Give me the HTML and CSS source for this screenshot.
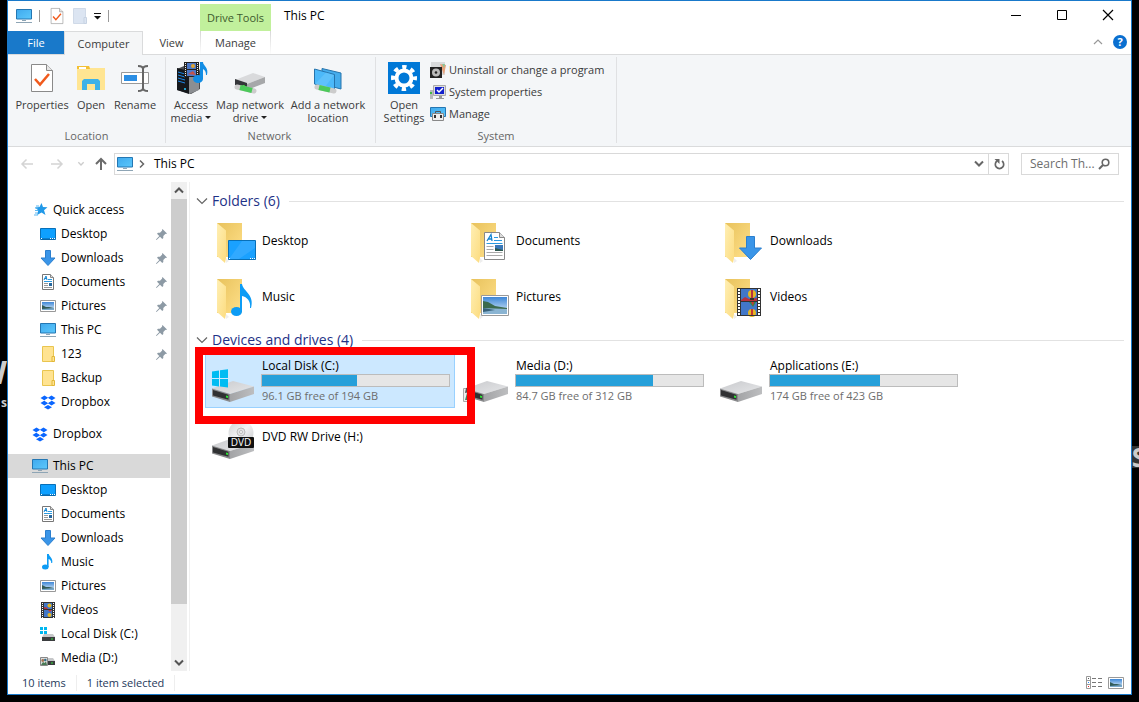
FILE: index.html
```html
<!DOCTYPE html>
<html lang="en">
<head>
<meta charset="utf-8">
<title>This PC</title>
<link rel="stylesheet" href="styles.css">
</head>
<body>
<svg class="sprite" aria-hidden="true">
  <defs>
    <linearGradient id="gScreen" x1="0" y1="0" x2="1" y2="1"><stop offset="0" stop-color="#3fa9ee"/><stop offset="1" stop-color="#5cc8fb"/></linearGradient>
    <linearGradient id="gBack" x1="0" y1="0" x2="1" y2="1"><stop offset="0" stop-color="#e8c25c"/><stop offset="1" stop-color="#ffe08a"/></linearGradient>
    <linearGradient id="gFlap" x1="0" y1="0" x2="1" y2="1"><stop offset="0" stop-color="#ffefb4"/><stop offset="1" stop-color="#fcdc80"/></linearGradient>
    <linearGradient id="gTop" x1="0" y1="0" x2="1" y2="1"><stop offset="0" stop-color="#c9cacd"/><stop offset="1" stop-color="#e6e7e9"/></linearGradient>
    <linearGradient id="gSide" x1="0" y1="0" x2="1" y2="0"><stop offset="0" stop-color="#a3a4a6"/><stop offset="1" stop-color="#bdbec0"/></linearGradient>
    <linearGradient id="gSky" x1="0" y1="0" x2="0" y2="1"><stop offset="0" stop-color="#3d86d6"/><stop offset="1" stop-color="#e2f2fb"/></linearGradient>
    <linearGradient id="gDisc" x1="0" y1="0" x2="1" y2="1"><stop offset="0" stop-color="#cfd0d2"/><stop offset=".5" stop-color="#f3f3f4"/><stop offset="1" stop-color="#c6c7c9"/></linearGradient>
  </defs>
  <symbol id="pc" viewBox="0 0 16 16"><path d="M.5 1.500h15v9.500h-15z" fill="url(#gScreen)" stroke="#2477b3"/><path d="M6 12h4v1H6zM0 14h16v1H0z" fill="#8ea5b5"/></symbol>
  <symbol id="desk" viewBox="0 0 16 16"><path d="M.5 2.500h15v11H.5z" fill="#0ea0ff" stroke="#0870b8"/><path d="M1 13h14" stroke="#0a5f9c"/><path d="M1 12.500h1M10 12.500h1m1 0h1m1 0h1" stroke="#fff"/></symbol>
  <symbol id="down" viewBox="0 0 16 16"><path d="M5.500.500h5V8h4.500L8 15.500 1 8h4.500z" fill="#3a95e8" stroke="#2b7fce"/></symbol>
  <symbol id="doc" viewBox="0 0 16 16"><path d="M2.500.500h8l3 3v12h-11z" fill="#fff" stroke="#777"/><path d="M10.500.500v3h3" fill="#ddd" stroke="#888"/><path d="M4 6l2-4 1 4M4.500 4.500h2.500" stroke="#1484d0" fill="none"/><path d="M8 5.500h4M4 7.500h8" stroke="#2b9ae0"/><path d="M4 9.500h4M4 11.500h4M4 13.500h8" stroke="#999"/><path d="M9 9h3v3H9z" fill="#27679d"/></symbol>
  <symbol id="pic" viewBox="0 0 16 16"><path d="M.500 2.500h15v11H.500z" fill="#fff" stroke="#999"/><path d="M2 4h12v8H2z" fill="url(#gSky)"/><path d="M2 7l4 2h3l5 1v2H2z" fill="#325b57"/><path d="M2 11l12-1v2H2z" fill="#79a9cc"/></symbol>
  <symbol id="fold" viewBox="0 0 16 16"><path d="M2.500.500h11v15h-11z" fill="#ffe391" stroke="#e9c54f"/><path d="M12 10.500h2.500v5H12z" fill="#ffe391" stroke="#e2b737"/></symbol>
  <symbol id="drop" viewBox="0 0 16 16"><path d="M4.500 1.500l4 2.500-4 2.500L.500 4zM11.500 1.500l4 2.500-4 2.500-4-2.500zM4.500 6.500l4 2.500-4 2.500-4-2.500zM11.500 6.500l4 2.500-4 2.500-4-2.500zM8 11l4 2.200L8 15.500l-4-2.300z" fill="#0a66ff"/><path d="M8 4l4 2.500L8 9 4 6.500z" fill="#fff"/></symbol>
  <symbol id="note" viewBox="0 0 16 16"><ellipse cx="5.300" cy="13" rx="3.300" ry="2.500" fill="#0d9cf5"/><path d="M7 0h1.800c.5 3 4.500 4 3.400 9h-1C11.500 7 10 5.500 8.600 5v8H7z" fill="#0d9cf5"/></symbol>
  <symbol id="film" viewBox="0 0 16 16"><path d="M1 0h14v16H1z" fill="#333"/><path d="M4 1h8v6H4zM4 8h8v7H4z" fill="#4277c8"/><path d="M2.500 1v15M13.500 1v15" stroke="#fff" stroke-dasharray="1 1"/><circle cx="9.500" cy="3.500" r="2" fill="#e6b722"/><path d="M4 5l4 1-1 1H4z" fill="#b9323d"/><circle cx="9.500" cy="13" r="2" fill="#e6b722"/><path d="M8 8h4l-2 2z" fill="#c9372f"/></symbol>
  <symbol id="sdrive" viewBox="0 0 16 16"><path d="M4 8h9l2 3H2z" fill="#c6c7c9"/><path d="M2 11h13v4H2z" fill="#3b3d3f"/><path d="M11 12.500h2v1h-2z" fill="#32e03b"/></symbol>
  <symbol id="sdriveC" viewBox="0 0 16 16"><use href="#sdrive"/><path d="M0 1h3v3H0zM4 1h3v3H4zM0 5h3v3H0zM4 5h3v3H4z" fill="#00b7f0"/></symbol>
  <symbol id="sdriveD" viewBox="0 0 16 16"><use href="#sdrive"/><path d="M.500 7.500h7v8h-7z" fill="#ddd" stroke="#888"/><circle cx="2.800" cy="10.500" r="1.400" fill="#a5724f"/><circle cx="5.300" cy="10" r="1.300" fill="#35718b"/><path d="M1 15l2-3 1.500 1L6 11.500 7 15z" fill="#497a55"/></symbol>
  <symbol id="star" viewBox="0 0 16 16"><path d="M9.500 1l1.500 4 4.500.3-3.500 3 1.500 4.700-4-2.400L5.200 13l1-4.700L3 5.500l4.500-.4z" fill="#2199e8"/><path d="M4 4h3M3 6h3M3 8.500h3M3 11h3M2 13h4" stroke="#5bb6f0"/></symbol>
  <symbol id="pin" viewBox="0 0 11 11"><path d="M6.500 0L11 4.500l-1 .5-.5-.2-2.200 2.300v2L6.300 10 4 7.700.8 10.800 0 11l.2-.8L3.300 7 1 4.700l1-1h2L6.200 1.500 6 1z" fill="#8d9aa5"/></symbol>
  <symbol id="check" viewBox="0 0 24 32"><path d="M1.500 2.500h15l6 6v21h-21z" fill="#fff" stroke="#8a8a8a"/><path d="M16.500 2.500v6h6" fill="#e6e6e6" stroke="#8a8a8a"/><path d="M5 17l5 5.500L19 12" fill="none" stroke="#f15a1c" stroke-width="2.500"/></symbol>
  <symbol id="folder" viewBox="0 0 48 48"><path d="M8 6h25v34H8z" fill="url(#gBack)"/><path d="M8 6l9 7.500V41l-1 5-8-7z" fill="url(#gFlap)"/><path d="M17 41l3 3-3 2z" fill="#eee"/></symbol>
  <symbol id="drive" viewBox="0 0 48 48"><path d="M3 31.500L24 24l21 5.500L21 37z" fill="url(#gTop)"/><path d="M21 37l24-7.500V37l-24 8z" fill="url(#gSide)"/><path d="M3 31.500L21 37v8L3 39.500z" fill="#88898b"/><path d="M4 33l15.500 4.700v5L4 38.500z" fill="#303133"/><path d="M17 38.500l2 .5v2l-2-.5z" fill="#2de536"/></symbol>
  <symbol id="chev" viewBox="0 0 12 12"><path d="M1 3.500L6 8.500l5-5" fill="none" stroke="currentColor" stroke-width="1.200"/></symbol>
  <symbol id="chevb" viewBox="0 0 12 12"><path d="M2 3.500L6 7.500l4-4" fill="none" stroke="currentColor" stroke-width="2"/></symbol>
</svg>

<span class="wall wall-a">W</span><span class="wall wall-b">s</span><span class="wall wall-c">S</span>

<div class="window">
  <header class="titlebar">
    <div class="quick">
      <svg class="i16"><use href="#pc"/></svg><span class="bar"></span>
      <button class="bare qa-props" aria-label="Properties"><svg width="14" height="18"><use href="#check"/></svg></button>
      <button class="bare qa-new" aria-label="New folder"><svg width="14" height="16" viewBox="0 0 14 16"><path d="M.500.500h12v15H.500z" fill="#dce5f2" stroke="#d0dae8"/><path d="M11 9.500h2.500v6H11z" fill="#dce5f2" stroke="#c7d3e3"/></svg></button>
      <button class="bare qa-more" aria-label="Customize toolbar"><svg width="7" height="7" viewBox="0 0 7 7"><path d="M0 0h7v1H0zM0 3h7L3.500 6.500z" fill="#111"/></svg></button><span class="bar"></span>
    </div>
    <div class="context">Drive Tools</div>
    <h1 class="title">This PC</h1>
    <div class="controls">
      <button class="bare" aria-label="Minimize"><svg width="12" height="12" viewBox="0 0 12 12"><path d="M1 5.500h10" stroke="#000"/></svg></button>
      <button class="bare" aria-label="Maximize"><svg width="12" height="12" viewBox="0 0 12 12"><path d="M1.500.500h9v9h-9z" fill="none" stroke="#000"/></svg></button>
      <button class="bare" aria-label="Close"><svg width="12" height="12" viewBox="0 0 12 12"><path d="M1 0l10 10M11 0L1 10" stroke="#000" stroke-width="1.200"/></svg></button>
    </div>
  </header>

  <div class="tabs">
    <button class="tab tab-file">File</button>
    <button class="tab tab-computer">Computer</button>
    <button class="tab tab-view">View</button>
    <button class="tab tab-manage">Manage</button>
    <div class="tabs-end">
      <button class="bare" aria-label="Collapse ribbon"><svg width="12" height="12" viewBox="0 0 12 12"><path d="M2 8l4-4 4 4" fill="none" stroke="#999" stroke-width="1.200"/></svg></button>
      <button class="help" aria-label="Help">?</button>
    </div>
  </div>

  <div class="ribbon">
    <section class="group group-location">
      <div class="tools">
        <button class="big"><svg viewBox="0 0 32 32"><use href="#check" x="4" y="0" width="24" height="32"/></svg>Properties</button>
        <button class="big big-open"><svg viewBox="0 0 32 32"><path d="M2 4h12l1 2h15v22H2z" fill="#ffe592"/><path d="M2 4h12l1 3H2z" fill="#f3c033"/><path d="M4 5h7v2H4z" fill="#fff"/><path d="M7 28V19l2-2h14l2 2v9h-5v-6h-8v6z" fill="#3db2e8"/></svg>Open</button>
        <button class="big big-rename"><svg viewBox="0 0 32 32"><path d="M2.500 10.500h27v11h-27z" fill="#fff" stroke="#999"/><path d="M5 13h13v6H5z" fill="#2b8ee4"/><path d="M19 4c3 0 5 1 5 3v19c0 2-2 3-5 3M29 4c-3 0-5 1-5 3v19c0 2 2 3 5 3" stroke="#666" stroke-width="2" fill="none"/></svg>Rename</button>
      </div>
      <h2 class="caption">Location</h2>
    </section>
    <section class="group group-network">
      <div class="tools">
        <button class="big big-media"><svg viewBox="0 0 32 32"><path d="M2 7l7-3h14l2 5v18l-9 5-14-4z" fill="#4a4c50"/><path d="M2 6l12 3v23L2 28z" fill="#15181c"/><path d="M14 9l10-4v23l-10 4z" fill="#8b8e92"/><path d="M3 10l7 2M3 13l7 2M3 16l7 2M3 19l7 2" stroke="#1d87e8"/><circle cx="10" cy="27" r="1" fill="#2acbff"/><path d="M9 0h15v15H9z" fill="#222"/><path d="M12 1h9v6h-9zM12 8h9v6h-9z" fill="#4c78c8"/><circle cx="18" cy="4" r="2" fill="#e0a430"/><path d="M13 12l5-3 3 4z" fill="#c65349"/><path d="M10.500 1v14M22.500 1v14" stroke="#eee" stroke-dasharray="1 1"/><ellipse cx="23" cy="17" rx="5" ry="4" fill="#128de4"/><path d="M25 0h3c0 4 6 5 4 13h-1c0-3-1-5-3-6v10h-3z" fill="#128de4"/></svg><span>Access<br>media<i class="caret"></i></span></button>
        <button class="big big-map"><svg viewBox="0 0 32 32"><path d="M1 18l18-7 12 4-18 7z" fill="#d9dadc"/><path d="M13 22l18-7v6l-18 7z" fill="#a6a8aa"/><path d="M1 17l12 4v6L1 23z" fill="#34363a"/><path d="M9 23l2 .6v1.500l-2-.6z" fill="#3f3"/><path d="M3 25l17 4" stroke="#ccc" stroke-width="5" stroke-linecap="round"/><path d="M6 25.500l12 3" stroke="#4cc95a" stroke-width="5"/></svg><span>Map network<br>drive<i class="caret"></i></span></button>
        <button class="big big-add"><svg viewBox="0 0 32 32"><path d="M10 6.500l19 4.500v16l-19-5z" fill="#45acec" stroke="#2674ad"/><path d="M2.500 7l20 5.500V28l-20-6z" fill="#4cb9fa" stroke="#2674ad"/><path d="M3 22L14 10.500l8 2.500-9 12z" fill="#7bcefd" opacity=".4"/><path d="M5 25l17 4" stroke="#ccc" stroke-width="5" stroke-linecap="round"/><path d="M7 25.500l11 2.500" stroke="#4cc95a" stroke-width="5"/></svg><span>Add a network<br>location</span></button>
      </div>
      <h2 class="caption">Network</h2>
    </section>
    <section class="group group-system">
      <div class="tools">
        <button class="big big-settings"><svg viewBox="0 0 32 32"><path d="M0 0h32v32H0z" fill="#0078d7"/><circle cx="16" cy="16" r="7.500" fill="none" stroke="#fff" stroke-width="4"/><circle cx="16" cy="16" r="11" fill="none" stroke="#fff" stroke-width="4" stroke-dasharray="4.320 4.320" stroke-dashoffset="2.160"/></svg><span>Open<br>Settings</span></button>
        <div class="list">
          <button class="small"><svg class="i16" viewBox="0 0 16 16"><path d="M1 0h14v13H1z" fill="#d9dbdc"/><path d="M10 2l6 1-2 10z" fill="#e8a17a"/><path d="M12 2h3l-1 4z" fill="#86c69a"/><path d="M0 5h12v11H0z" fill="#222"/><circle cx="6" cy="10.500" r="4" fill="#bbb"/><circle cx="6" cy="10.500" r="1.300" fill="#222"/></svg>Uninstall or change a program</button>
          <button class="small"><svg class="i16" viewBox="0 0 16 16"><path d="M3.500 1.500h12v10h-12z" fill="#ddd" stroke="#aaa"/><path d="M5 3h9v7H5z" fill="#1220cc"/><path d="M7 6l2 2 4-4" stroke="#fff" stroke-width="1.500" fill="none"/><path d="M9 12h3v2h2v1H6v-1h3z" fill="#999"/><path d="M0 6h3v9H0z" fill="#b8babc"/><path d="M0 8h2v2H0z" fill="#4b4"/></svg>System properties</button>
          <button class="small"><svg class="i16" viewBox="0 0 16 16"><path d="M.500 1.500h15v9H.500z" fill="url(#gScreen)" stroke="#2477b3"/><path d="M5.500 7V5.500h5V7" fill="none" stroke="#555"/><path d="M2.500 7.500h11v7h-11z" fill="#eee" stroke="#888"/><path d="M4 9h2v3H4zM10 9h2v3h-2z" fill="#333"/></svg>Manage</button>
        </div>
      </div>
      <h2 class="caption">System</h2>
    </section>
  </div>

  <div class="address">
    <button class="bare nav-btn" aria-label="Back"><svg width="14" height="12" viewBox="0 0 14 12"><path d="M13 6H2M6.500 1.500L2 6l4.500 4.500" fill="none" stroke="#d4d4d4" stroke-width="1.500"/></svg></button>
    <button class="bare nav-btn" aria-label="Forward"><svg width="14" height="12" viewBox="0 0 14 12"><path d="M1 6h11M7.500 1.500L12 6l-4.500 4.500" fill="none" stroke="#d4d4d4" stroke-width="1.500"/></svg></button>
    <button class="bare nav-recent" aria-label="Recent locations"><svg width="8" height="8"><use href="#chevb"/></svg></button>
    <button class="bare nav-up" aria-label="Up"><svg width="14" height="14" viewBox="0 0 14 14"><path d="M7 13V2M2 7l5-5 5 5" fill="none" stroke="#6b6b6b" stroke-width="2"/></svg></button>
    <div class="path">
      <svg class="i16"><use href="#pc"/></svg>
      <svg class="crumb" width="8" height="10" viewBox="0 0 8 10"><path d="M2 1.500L5.500 5 2 8.500" fill="none" stroke="#666" stroke-width="1.500"/></svg>
      <a href="#">This PC</a>
      <button class="bare path-drop" aria-label="Previous locations"><svg width="12" height="12"><use href="#chevb"/></svg></button>
      <button class="bare refresh" aria-label="Refresh"><svg width="12" height="12" viewBox="0 0 12 12"><path d="M9 3a4.200 4.200 0 1 1-5 0" fill="none" stroke="#666" stroke-width="1.700"/><path d="M1.500 1h5v5L5 4.500z" fill="#666"/></svg></button>
    </div>
    <label class="search"><input type="text" placeholder="Search Th..." aria-label="Search This PC"><svg width="12" height="12" viewBox="0 0 12 12"><circle cx="7.500" cy="4.500" r="3.300" fill="none" stroke="#666" stroke-width="1.600"/><path d="M5 7L1 11" stroke="#666" stroke-width="2"/></svg></label>
  </div>

  <div class="body">
    <nav class="side">
      <a href="#" class="row top"><svg class="i16"><use href="#star"/></svg>Quick access</a>
      <a href="#" class="row"><svg class="i16"><use href="#desk"/></svg>Desktop<svg class="pin"><use href="#pin"/></svg></a>
      <a href="#" class="row"><svg class="i16"><use href="#down"/></svg>Downloads<svg class="pin"><use href="#pin"/></svg></a>
      <a href="#" class="row"><svg class="i16"><use href="#doc"/></svg>Documents<svg class="pin"><use href="#pin"/></svg></a>
      <a href="#" class="row"><svg class="i16"><use href="#pic"/></svg>Pictures<svg class="pin"><use href="#pin"/></svg></a>
      <a href="#" class="row"><svg class="i16"><use href="#pc"/></svg>This PC<svg class="pin"><use href="#pin"/></svg></a>
      <a href="#" class="row"><svg class="i16"><use href="#fold"/></svg>123<svg class="pin"><use href="#pin"/></svg></a>
      <a href="#" class="row"><svg class="i16"><use href="#fold"/></svg>Backup</a>
      <a href="#" class="row"><svg class="i16"><use href="#drop"/></svg>Dropbox</a>
      <a href="#" class="row top spaced"><svg class="i16"><use href="#drop"/></svg>Dropbox</a>
      <a href="#" class="row top spaced current"><svg class="i16"><use href="#pc"/></svg>This PC</a>
      <a href="#" class="row"><svg class="i16"><use href="#desk"/></svg>Desktop</a>
      <a href="#" class="row"><svg class="i16"><use href="#doc"/></svg>Documents</a>
      <a href="#" class="row"><svg class="i16"><use href="#down"/></svg>Downloads</a>
      <a href="#" class="row"><svg class="i16"><use href="#note"/></svg>Music</a>
      <a href="#" class="row"><svg class="i16"><use href="#pic"/></svg>Pictures</a>
      <a href="#" class="row"><svg class="i16"><use href="#film"/></svg>Videos</a>
      <a href="#" class="row"><svg class="i16"><use href="#sdriveC"/></svg>Local Disk (C:)</a>
      <a href="#" class="row"><svg class="i16"><use href="#sdriveD"/></svg>Media (D:)</a>
    </nav>
    <div class="scroll">
      <button class="bare scroll-btn up" aria-label="Scroll up"><svg width="12" height="12"><use href="#chevb"/></svg></button>
      <div class="track"><div class="thumb"></div></div>
      <button class="bare scroll-btn" aria-label="Scroll down"><svg width="12" height="12"><use href="#chevb"/></svg></button>
    </div>

    <main class="pane">
      <h2 class="section"><svg width="12" height="12"><use href="#chev"/></svg>Folders (6)</h2>
      <div class="grid">
        <a href="#" class="item"><svg class="i48" viewBox="0 0 48 48"><use href="#folder"/><path d="M19.500 23.500h27v19h-27z" fill="#1aa1ff" stroke="#0870b8"/><path d="M20 42l13-18h13v7L30 42z" fill="#47b2ff" opacity=".5"/><path d="M20 41.500h1m20 0h1m1 0h1m1 0h1" stroke="#fff"/></svg>Desktop</a>
        <a href="#" class="item"><svg class="i48" viewBox="0 0 48 48"><use href="#folder"/><path d="M21.500 15.500h15l5 5v22h-20z" fill="#fff" stroke="#888"/><path d="M36.500 15.500v5h5" fill="#ddd" stroke="#888"/><path d="M24 24l4-6.500 1 6.500M25 22h4" fill="none" stroke="#1484d0" stroke-width="1.300"/><path d="M31 20.500h4M31 23.500h8M23.500 26.500h16" stroke="#2b9ae0"/><path d="M23.500 29.500h7M23.500 32.500h7M23.500 35.500h16M23.500 38.500h16" stroke="#aaa"/><path d="M32 28h8v6h-8z" fill="#3a78b8"/><path d="M32 31l8 2v1h-8z" fill="#2f584e"/></svg>Documents</a>
        <a href="#" class="item"><svg class="i48" viewBox="0 0 48 48"><use href="#folder"/><path d="M29.500 19.500h8V31h7l-11 11.500L22.500 31h7z" fill="#3a95e8" stroke="#2b7fce"/></svg>Downloads</a>
        <a href="#" class="item"><svg class="i48" viewBox="0 0 48 48"><use href="#folder"/><ellipse cx="27.500" cy="38.500" rx="5.500" ry="4.500" fill="#0d9cf5"/><path d="M31 11h2c1 7 13 11 9 24h-1c1-7-3-11-8-12v16h-2z" fill="#0d9cf5"/></svg>Music</a>
        <a href="#" class="item"><svg class="i48" viewBox="0 0 48 48"><use href="#folder"/><path d="M18.500 22.500h27v20h-27z" fill="#fff" stroke="#999"/><path d="M20 24h24v17H20z" fill="url(#gSky)"/><path d="M20 28l5 1 7 4 12 2v2H20z" fill="#3c6a4d"/><path d="M20 35l24 1v5H20z" fill="#8ab4d2"/><path d="M20 35l12 2-12 2z" fill="#38617a"/></svg>Pictures</a>
        <a href="#" class="item"><svg class="i48" viewBox="0 0 48 48"><use href="#folder"/><path d="M20 15h24v28H20z" fill="#333"/><path d="M24 16h16v12H24zM24 29h16v13H24z" fill="#4277c8"/><path d="M22 16v27M42 16v27" stroke="#fff" stroke-width="2" stroke-dasharray="2 1"/><path d="M24 27l4-3 4 2 8-1v3H24z" fill="#b9323d"/><circle cx="35" cy="21" r="4" fill="#e6b722"/><path d="M34 17h2v8h-2z" fill="#b9323d"/><path d="M33 25h4v2h-4z" fill="#333"/><path d="M32 29h7l-3 5z" fill="#2d8b4b"/><path d="M34 29h3l-1 4z" fill="#c9372f"/><circle cx="35" cy="40" r="4" fill="#e6b722"/><path d="M34 36h2v6h-2z" fill="#c9372f"/><path d="M24 42h16v1H24z" fill="#333"/></svg>Videos</a>
      </div>
      <h2 class="section section-drives"><svg width="12" height="12"><use href="#chev"/></svg>Devices and drives (4)</h2>
      <div class="grid grid-drives">
        <div class="item selected">
          <svg class="i48" viewBox="0 0 48 48"><use href="#drive"/><path d="M3 14.500l7-1V21H3zM11 13.300l8-1.100V21h-8zM3 22h7v7.500l-7-1zM11 22h8v8.600l-8-1z" fill="#00bcf2"/></svg>
          <div class="info"><span>Local Disk (C:)</span><div class="usage"><div class="used" style="width:51%"></div></div><span class="free">96.1 GB free of 194 GB</span></div>
          <div class="mark"></div>
        </div>
        <div class="item">
          <svg class="i48" viewBox="0 0 48 48"><use href="#drive"/><path d="M.500 31.500h11v13H.500z" fill="#eee" stroke="#aaa"/><path d="M3 31l4-1v5l-5 1z" fill="#555"/><path d="M2 43l2-7 3 3 2-4 2 8z" fill="#498061"/></svg>
          <div class="info"><span>Media (D:)</span><div class="usage"><div class="used" style="width:73%"></div></div><span class="free">84.7 GB free of 312 GB</span></div>
        </div>
        <div class="item">
          <svg class="i48" viewBox="0 0 48 48"><use href="#drive"/></svg>
          <div class="info"><span>Applications (E:)</span><div class="usage"><div class="used" style="width:59%"></div></div><span class="free">174 GB free of 423 GB</span></div>
        </div>
        <a href="#" class="item"><svg class="i48" viewBox="0 0 48 48"><use href="#drive" y="1"/><circle cx="32" cy="20" r="12.500" fill="url(#gDisc)"/><circle cx="32" cy="19" r="4" fill="#e3e3e5" stroke="#bbb"/><circle cx="32" cy="19" r="1.500" fill="#fff" stroke="#bbb"/><rect x="19" y="24" width="26" height="11" rx="1" fill="#111"/><text class="dvd" x="32" y="33" text-anchor="middle">DVD</text></svg>DVD RW Drive (H:)</a>
      </div>
    </main>
  </div>

  <footer class="status">
    <span>10 items</span><span>1 item selected</span>
    <div class="views">
      <button class="bare" aria-label="Details view"><svg width="16" height="14" viewBox="0 0 16 14"><path d="M.500.500h4v12h-4zM.500 4.500h4M.500 8.500h4" fill="none" stroke="#999"/><path d="M6 2.500h4m2 0h4M6 6.500h4m2 0h4M6 10.500h4m2 0h4" stroke="#777"/><path d="M2 2.500h1" stroke="#555"/><path d="M2 6.500h1" stroke="#28f"/><path d="M2 10.500h1" stroke="#e22"/></svg></button>
      <button class="bare" aria-label="Large icons view"><svg width="14" height="16" viewBox="1 0 14 16" preserveAspectRatio="none"><use href="#pic" width="16" height="16"/></svg></button>
    </div>
  </footer>
</div>
</body>
</html>
```
FILE: styles.css
```css
* { box-sizing: border-box; }
body {
  margin: 0;
  height: 100vh;
  padding: 0 7px 7px;
  background: #000;
  color: #000;
  font: 12px/16px "Open Sans", "Noto Sans", sans-serif;
  position: relative;
  overflow: hidden;
}
svg { display: block; flex: none; overflow: visible; }
h1, h2 { margin: 0; font: inherit; }
a { color: inherit; text-decoration: none; }
button { font: inherit; color: inherit; margin: 0; padding: 0; border: 0; background: none; white-space: nowrap; }
.bare { display: flex; align-items: center; justify-content: center; }
.sprite { position: absolute; width: 0; height: 0; }
.i16 { width: 16px; height: 16px; }
.i48 { width: 48px; height: 48px; }

.wall { position: absolute; color: #ccc; font-weight: bold; line-height: 24px; }
.wall-a { left: -24px; top: 360px; font-size: 32px; }
.wall-b { left: 1px; top: 391px; font-size: 12px; }
.wall-c { right: -7px; top: 446px; font-size: 26px; background: #333; line-height: 22px; }

.window {
  position: relative;
  height: 100%;
  display: flex;
  flex-direction: column;
  background: #fff;
  border: 1px solid #1979ca;
}

.titlebar { display: flex; height: 30px; flex: none; }
.quick { display: flex; align-items: center; width: 192px; padding-left: 8px; }
.bar { width: 1px; height: 12px; margin-left: 7px; background: #999; }
.qa-props { margin-left: 10px; }
.qa-new { margin-left: 9px; }
.qa-more { margin-left: 7px; }
.context { width: 71px; margin-top: 3px; background: #c1f09c; color: #3e5a2d; font-size: 11px; line-height: 27px; text-align: center; white-space: nowrap; }
.title { padding-left: 13px; line-height: 30px; }
.controls { display: flex; margin-left: auto; }
.controls button { width: 46px; }

.tabs { display: flex; height: 24px; flex: none; border-bottom: 1px solid #dadbdc; color: #3b3b3b; font-size: 11px; }
.tab { height: 23px; }
.tab-file { width: 56px; background: #1979ca; color: #fff; }
.tab-computer { width: 79px; height: 24px; background: #f5f6f7; border: 1px solid #dadbdc; border-width: 1px 1px 0; }
.tab-view { width: 57px; }
.tab-manage { width: 71px; border: 1px solid; border-width: 0 1px; border-image: linear-gradient(#d5d5d5, #fff) 1; }
.tabs-end { display: flex; align-items: center; gap: 9px; margin-left: auto; padding: 0 4px 2px 0; }
.help { width: 14px; height: 14px; border-radius: 50%; background: #0a6fd0; color: #fff; font-weight: bold; line-height: 14px; }

.ribbon { display: flex; height: 92px; flex: none; background: #f4f6f8; border-bottom: 1px solid #dadbdc; color: #3b3b3b; font-size: 11px; }
.group { display: flex; flex-direction: column; margin: 2px 0 3px; border-right: 1px solid #e0e1e3; }
.group-location { width: 158px; padding-left: 5px; }
.group-network { width: 210px; padding-left: 3px; }
.group-system { width: 241px; padding-left: 5px; }
.tools { display: flex; flex: 1; min-height: 0; padding-top: 5px; }
.big { display: flex; flex-direction: column; align-items: center; width: 58px; gap: 4px; line-height: 13px; }
.big svg { width: 32px; height: 32px; }
.big-open { width: 40px; }
.big-rename { width: 48px; }
.big-media { width: 44px; }
.big-map { width: 74px; }
.big-add { width: 82px; }
.big-settings { width: 46px; }
.caret { display: inline-block; margin: 0 0 3px 3px; border: 3px solid transparent; border-top-color: #222; border-bottom: 0; }
.list { display: flex; flex-direction: column; padding-left: 3px; }
.small { display: flex; align-items: center; gap: 3px; height: 22px; padding-bottom: 6px; }
.caption { color: #666; line-height: 14px; text-align: center; margin-left: -5px; }

.address { display: flex; align-items: center; height: 35px; flex: none; padding: 0 12px 2px; }
.nav-btn { width: 14px; margin-right: 16px; }
.nav-recent { width: 8px; color: #ccc; margin: 0 9px 0 -3px; }
.nav-up { width: 14px; margin-right: 6px; }
.path { display: flex; align-items: center; flex: 1; height: 22px; padding-left: 2px; border: 1px solid #d9d9d9; }
.crumb { margin: 0 8px 0 5px; }
.path-drop { margin: 0 3px 0 auto; color: #666; }
.refresh { width: 20px; height: 20px; border-left: 1px solid #d9d9d9; }
.search { display: flex; align-items: center; width: 98px; height: 22px; margin-left: 12px; padding: 0 8px; border: 1px solid #d9d9d9; }
.search input { flex: 1; min-width: 0; padding: 0; border: 0; outline: 0; font: inherit; }
.search input::placeholder { color: #6d6d6d; opacity: 1; }

.body { display: flex; flex: 1; min-height: 0; }
.side { width: 162px; padding-top: 16px; overflow: hidden; }
.row { display: flex; align-items: center; gap: 5px; height: 24px; padding: 0 3px 0 32px; }
.top { padding-left: 24px; }
.spaced { margin-top: 8px; }
.current { background: #d9d9d9; }
.pin { width: 11px; height: 11px; margin-left: auto; }
.scroll { display: flex; flex-direction: column; width: 16px; margin-left: 1px; background: #f0f0f0; color: #555; }
.scroll-btn { height: 17px; }
.up { transform: rotate(180deg); }
.track { flex: 1; }
.thumb { height: 89%; background: #cdcdcd; }

.pane { flex: 1; margin-left: 2px; padding: 8px 7px 0 6px; border-left: 1px solid #f0f0f0; }
.section { display: flex; align-items: center; gap: 4px; height: 22px; color: #1e3287; font-size: 14px; line-height: 22px; }
.section svg { color: #666; }
.section::after { content: ""; flex: 1; height: 1px; margin-left: 5px; background: #e2e2e2; }
.section-drives { margin-top: 4px; }
.grid { display: grid; grid-template-columns: repeat(auto-fill, 250px); gap: 2px 4px; padding: 2px 0 1px 9px; }
.grid-drives { padding-top: 3px; }
.item { position: relative; display: flex; align-items: center; gap: 5px; height: 54px; padding: 0 4px 0 3px; border: 1px solid transparent; }
.selected { background: #cce8ff; border-color: #99d1ff; }
.info { flex: 1; }
.info span { display: block; line-height: 15px; }
.usage { height: 13px; margin: 1px 0 0 -1px; border: 1px solid #bcbcbc; background: #e6e6e6; }
.used { height: 100%; background: #26a0da; }
.info .free { color: #6d6d6d; font-size: 11px; line-height: 18px; }
.mark { position: absolute; inset: -8px -21px -17px -11px; z-index: 1; border: 8px solid #f00; }
.dvd { font-size: 10px; fill: #fff; }

.status { display: flex; align-items: center; height: 23px; flex: none; color: #1e395b; font-size: 11px; }
.status span { padding: 0 10px 0 14px; border-right: 1px solid #eee; }
.status span + span { padding-left: 10px; }
.views { display: flex; align-items: center; gap: 7px; margin-left: auto; padding-right: 8px; }
```
